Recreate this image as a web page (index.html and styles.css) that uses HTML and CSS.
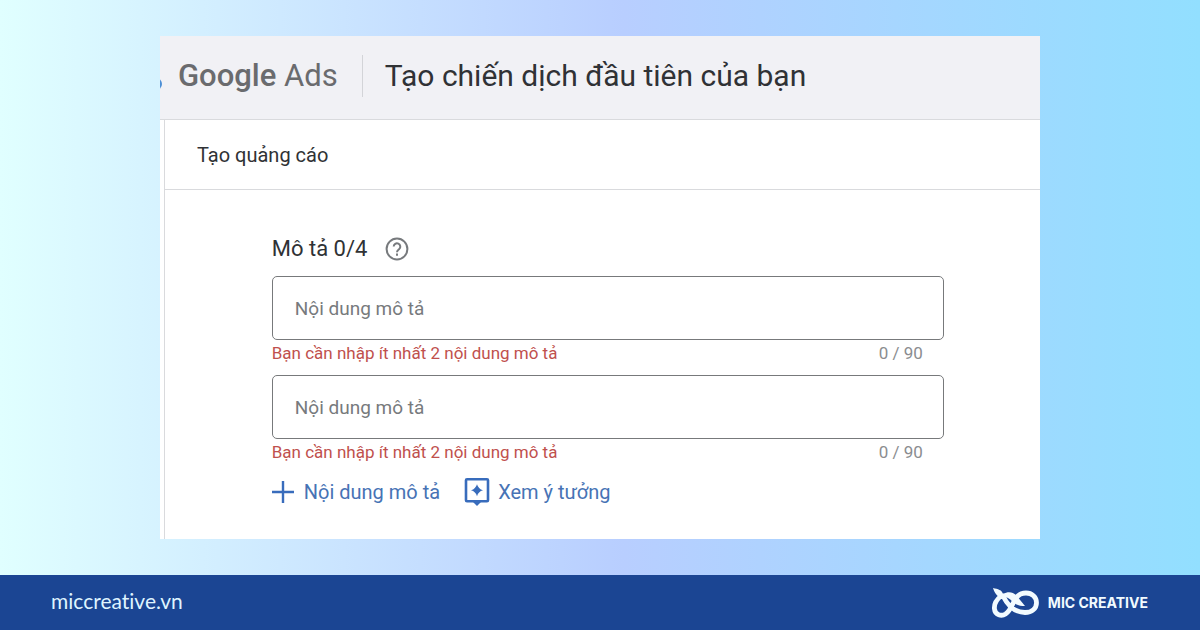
FILE: index.html
```html
<!DOCTYPE html>
<html lang="vi">
<head>
<meta charset="utf-8">
<meta name="viewport" content="width=device-width, initial-scale=1">
<title>Google Ads - Tạo chiến dịch đầu tiên của bạn</title>
<link rel="stylesheet" href="styles.css">
</head>
<body>
<main class="stage">
  <div class="window">
    <header class="topbar">
      <svg class="ads-mark" viewBox="0 0 3 12" aria-hidden="true"><circle cx="-4" cy="6" r="6" fill="#4d8fd6"/></svg>
      <span class="brand"><span class="brand-google">Google</span> Ads</span>
      <h1 class="title">Tạo chiến dịch đầu tiên của bạn</h1>
    </header>
    <div class="panel">
      <h2 class="panel-head">Tạo quảng cáo</h2>
      <form class="form">
        <div class="form-head">
          <h3 class="form-title">Mô tả 0/4</h3>
          <button class="help" type="button" aria-label="?">
            <svg viewBox="0 0 24 24" width="24" height="24" fill="none" stroke="#777a7d" stroke-width="2"><circle cx="12" cy="12" r="10.4"/><path d="M8.7 9.6a3.3 3.3 0 1 1 5.5 2.5c-1.3 1.1-2.2 1.6-2.2 3.1"/><path d="M12 16.6v2.2"/></svg>
          </button>
        </div>
        <div class="field">
          <input class="text-input" type="text" placeholder="Nội dung mô tả" aria-describedby="error-1" aria-label="Nội dung mô tả">
          <div class="field-note"><span class="error" id="error-1">Bạn cần nhập ít nhất 2 nội dung mô tả</span><span class="counter">0 / 90</span></div>
        </div>
        <div class="field">
          <input class="text-input" type="text" placeholder="Nội dung mô tả" aria-describedby="error-2" aria-label="Nội dung mô tả">
          <div class="field-note"><span class="error" id="error-2">Bạn cần nhập ít nhất 2 nội dung mô tả</span><span class="counter">0 / 90</span></div>
        </div>
        <div class="actions">
          <button class="action" type="button">
            <svg viewBox="0 0 22 22" width="22" height="22" fill="none" stroke="#386cbc" stroke-width="2.4"><path d="M0 11h22M11 0v22"/></svg>
            Nội dung mô tả
          </button>
          <button class="action action-ideas" type="button">
            <svg viewBox="0 0 26 30" width="26" height="30"><path d="M3 2.2h20q1 0 1 1v20q0 1-1 1H3q-1 0-1-1v-20q0-1 1-1z" fill="none" stroke="#386cbc" stroke-width="2.6"/><path d="M8 24h10l-5 5z" fill="#386cbc"/><path d="M13 7.2q1.3 4.7 6 6-4.700 1.300-6 6-1.300-4.700-6-6 4.700-1.300 6-6z" fill="#386cbc"/></svg>
            Xem ý tưởng
          </button>
        </div>
      </form>
    </div>
  </div>
</main>
<footer class="footer">
  <a class="site" href="#">miccreative.vn</a>
  <div class="company">
    <svg viewBox="0 0 48 30" width="48" height="30" aria-hidden="true">
      <path d="M9 8C4 12 2 17 2.500 21c.5 6 7 7.500 11 5 6-4 7-12 11-16.500C27 6 30 5 34 5c6 0 10.500 4 10.500 9.700S40 24.500 33 24.500C23 24.500 16 18 11 8" fill="none" stroke="#f2fbff" stroke-width="4.800" stroke-linecap="round" stroke-linejoin="round"/>
      <path d="M1 0c5 1 9 2 10 6 5-3 10-2 13 1l9 11c-5 0-9-1-12-4-4-4-6-5-10-5C6 10 3 6 1 0z" fill="#f2fbff"/>
    </svg>
    <span class="company-name">MIC CREATIVE</span>
  </div>
</footer>
</body>
</html>
```
FILE: styles.css
```css
* { box-sizing: border-box; }

body {
  margin: 0;
  min-height: 100vh;
  display: flex;
  flex-direction: column;
  font-family: Roboto, "Noto Sans", sans-serif;
  color: #303235;
  background: linear-gradient(90deg, #e0ffff 0%, #b8ceff 52%, #92dfff 100%);
}

h1, h2, h3 { margin: 0; font-weight: 400; }

button {
  padding: 0;
  border: 0;
  background: none;
  font: inherit;
  cursor: pointer;
}

svg { display: block; flex: none; }

.stage {
  flex: 1;
  display: flex;
  padding: 36px calc(40% / 3);
}

.window {
  flex: 1;
  display: flex;
  flex-direction: column;
  background: #fff;
}

.topbar {
  display: flex;
  align-items: center;
  height: 84px;
  padding-bottom: 3px;
  background: #f1f1f5;
  border-bottom: 1px solid #d9dadd;
}

.ads-mark { width: 3px; height: 12px; margin-top: 16px; }

.brand {
  padding: 0 24px 0 15px;
  border-right: 1px solid #d3d4d8;
  font-size: 31px;
  line-height: 42px;
  color: #6a6b6e;
}

.brand-google { font-weight: 500; }

.title {
  padding-left: 22px;
  font-size: 30px;
  line-height: 40px;
}

.panel {
  flex: 1;
  margin-left: 4px;
  border-left: 1px solid #d9dadd;
}

.panel-head {
  padding: 20px 32px 19px;
  border-bottom: 1px solid #d9dadd;
  font-size: 20px;
  line-height: 30px;
}

.form {
  display: flex;
  flex-direction: column;
  padding: 43px 11% 0 12.2%;
}

.form-head {
  display: flex;
  align-items: center;
  gap: 18px;
  height: 32px;
  margin-bottom: 11px;
}

.form-title { font-size: 22px; line-height: 32px; }

.text-input {
  display: block;
  width: 100%;
  height: 64px;
  padding: 0 22px;
  border: 1px solid #77797b;
  border-radius: 5px;
  background: #fff;
  font: 19px/24px Roboto, "Noto Sans", sans-serif;
  color: #303235;
}

.text-input::placeholder { color: #777a7d; }

.field-note {
  display: flex;
  justify-content: space-between;
  height: 35px;
  padding-right: 21px;
  font-size: 17px;
  line-height: 27px;
}

.error { color: #c0504d; }
.counter { color: #8b8d90; }

.actions { display: flex; gap: 24px; }

.action {
  display: flex;
  align-items: center;
  gap: 10px;
  height: 36px;
  font-size: 20px;
  color: #4773b5;
}

.action-ideas { gap: 8px; }

.footer {
  display: flex;
  align-items: center;
  justify-content: space-between;
  height: 55px;
  padding: 0 52px 0 51px;
  background: #1b4593;
}

.site {
  padding-bottom: 4px;
  font-family: Lato, sans-serif;
  font-size: 21px;
  font-variant-ligatures: none;
  color: #dff4ff;
  text-decoration: none;
}

.company { display: flex; align-items: center; gap: 8px; }

.company-name {
  font-family: Inter, sans-serif;
  font-size: 14px;
  font-weight: 700;
  color: #f2fbff;
}
```
